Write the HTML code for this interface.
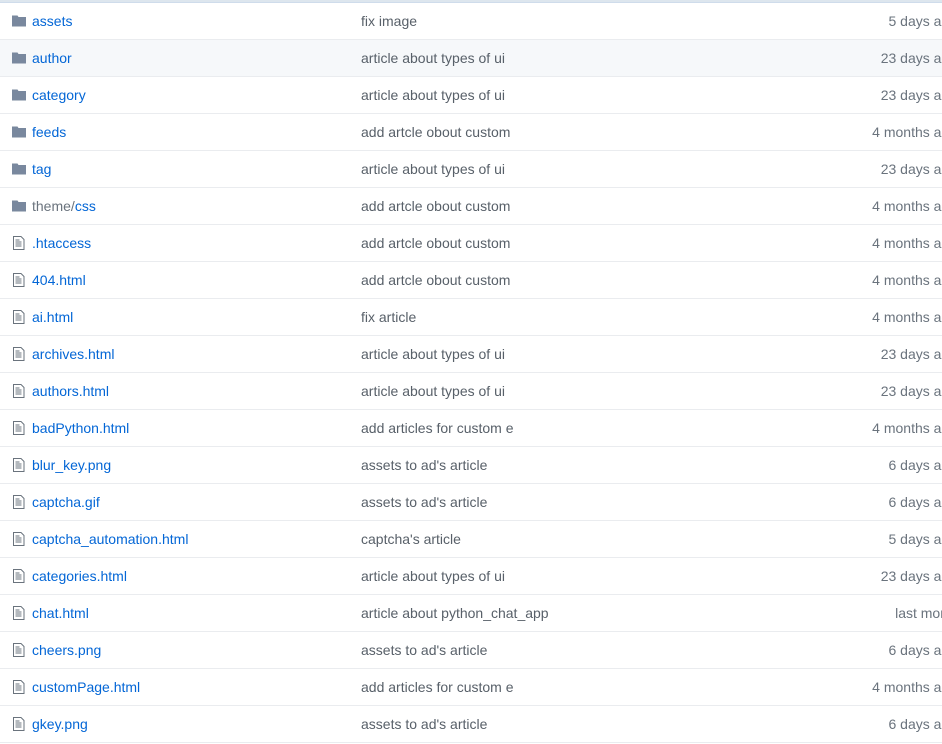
<!DOCTYPE html>
<html><head><meta charset="utf-8"><style>
html,body{margin:0;padding:0;background:#fff;width:942px;height:744px;overflow:hidden}
body{font-family:"Liberation Sans",sans-serif;font-size:14px}
.top{height:2px;background:#dde6ee;border-bottom:1px solid #cfdceb}
.row{position:relative;height:36px;border-bottom:1px solid #eaecef;line-height:36px}
.row.h{background:#f6f8fa}
.ic{position:absolute;left:12px;top:11px;width:14px;height:14px}
.n{position:absolute;left:32px;color:#0366d6}
.n .g{color:#6a737d}
.m{position:absolute;left:361px;color:#586069}
.d{position:absolute;right:-15px;color:#6a737d;white-space:nowrap}
</style></head><body>
<div class="top"></div>
<div id="list"></div>
<script>
var F='<svg class="ic" viewBox="0 0 14 14"><path d="M0 1.5h5.5l1 1.5H14V12.5H0z" fill="#79889e"/></svg>';
var D='<svg class="ic" viewBox="0 0 14 14"><path d="M1.5 0.5h7.5l3 3v10h-10.5z" fill="none" stroke="#6a737d" stroke-width="1"/><path d="M3.5 6h6M3.5 8h6M3.5 10h6M3.5 4h4" stroke="#6a737d" stroke-width="1"/></svg>';
var rows=[
[1,'assets','fix image','5 days ago'],
[1,'author','article about types of ui','23 days ago'],
[1,'category','article about types of ui','23 days ago'],
[1,'feeds','add artcle obout custom','4 months ago'],
[1,'tag','article about types of ui','23 days ago'],
[1,'<span class="g">theme/</span>css','add artcle obout custom','4 months ago'],
[0,'.htaccess','add artcle obout custom','4 months ago'],
[0,'404.html','add artcle obout custom','4 months ago'],
[0,'ai.html','fix article','4 months ago'],
[0,'archives.html','article about types of ui','23 days ago'],
[0,'authors.html','article about types of ui','23 days ago'],
[0,'badPython.html','add articles for custom e','4 months ago'],
[0,'blur_key.png','assets to ad\'s article','6 days ago'],
[0,'captcha.gif','assets to ad\'s article','6 days ago'],
[0,'captcha_automation.html','captcha\'s article','5 days ago'],
[0,'categories.html','article about types of ui','23 days ago'],
[0,'chat.html','article about python_chat_app','last mon'],
[0,'cheers.png','assets to ad\'s article','6 days ago'],
[0,'customPage.html','add articles for custom e','4 months ago'],
[0,'gkey.png','assets to ad\'s article','6 days ago']];
var h='';
rows.forEach(function(r,i){
h+='<div class="row'+(i==1?' h':'')+'">'+(r[0]?F:D)+'<span class="n">'+r[1]+'</span><span class="m">'+r[2]+'</span><span class="d"'+(r[3]=='last mon'?' style="right:-6px"':'')+'>'+r[3]+'</span></div>';
});
document.getElementById('list').innerHTML=h;
</script>
</body></html>
